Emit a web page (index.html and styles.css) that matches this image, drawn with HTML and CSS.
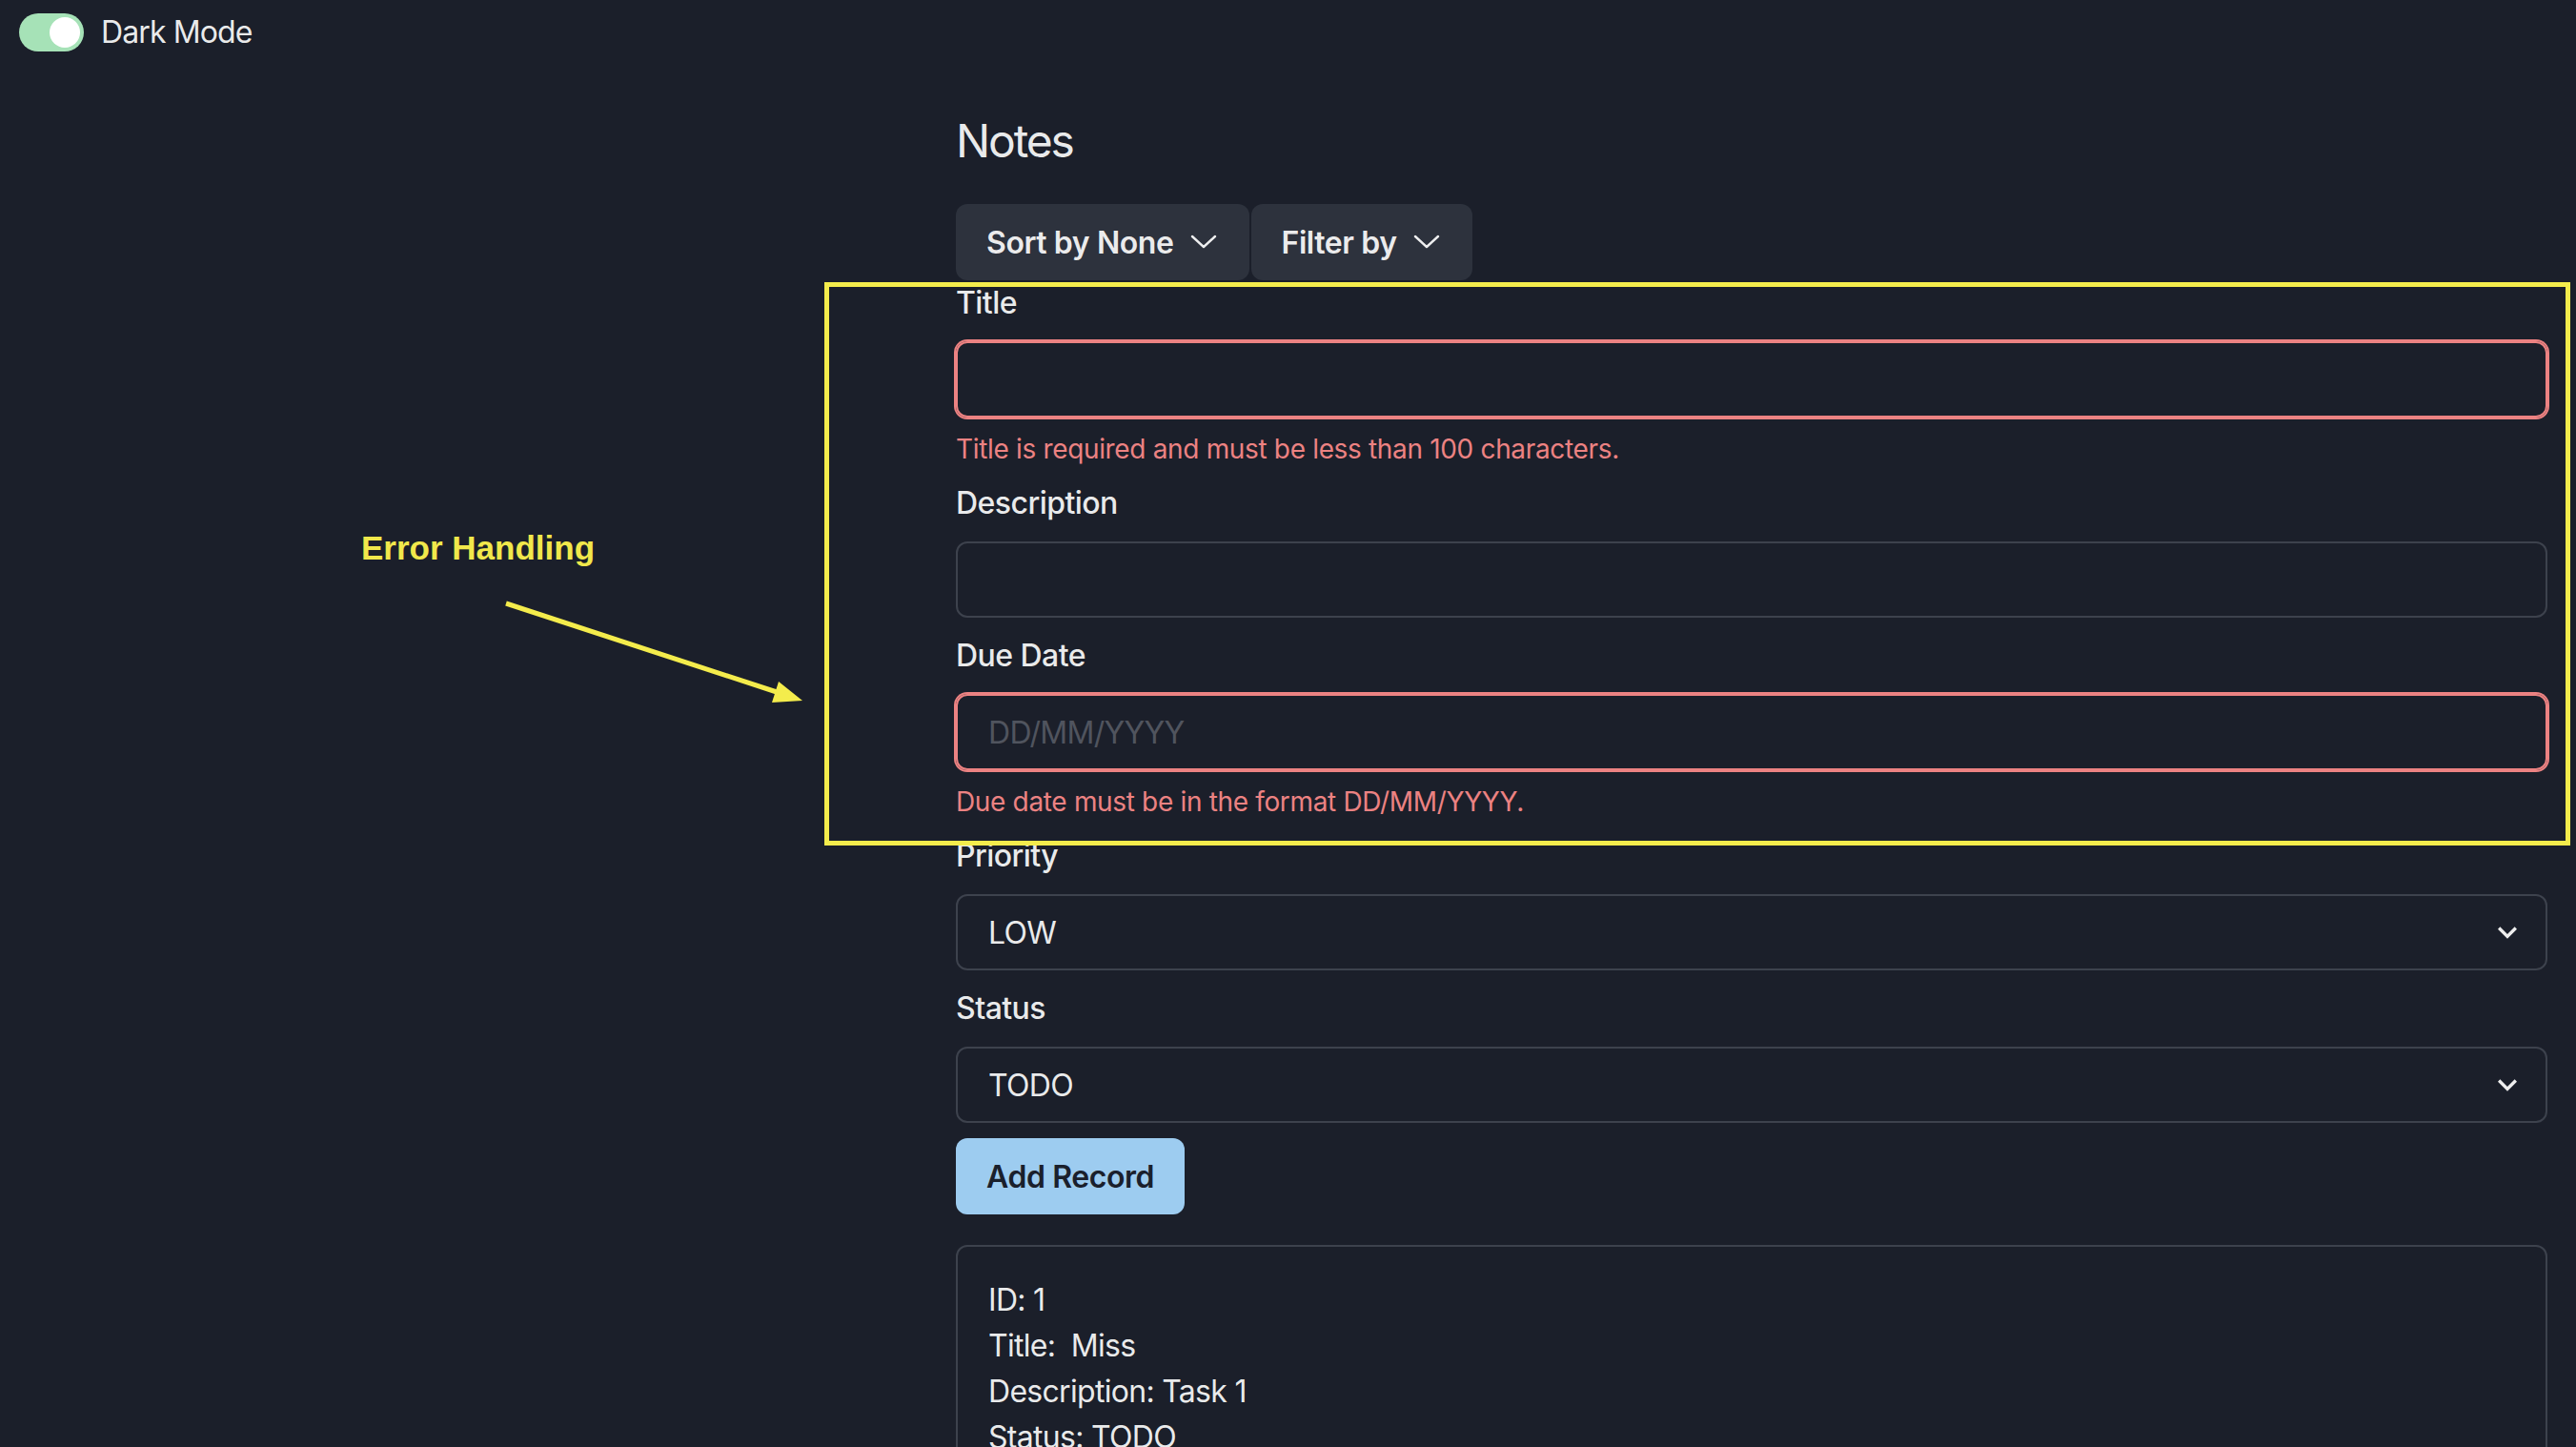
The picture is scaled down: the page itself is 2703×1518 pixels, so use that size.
FILE: index.html
```html
<!DOCTYPE html>
<html lang="en">
<head>
<meta charset="utf-8">
<title>Notes</title>
<link rel="stylesheet" href="styles.css">
</head>
<body>
<div class="topbar">
  <span class="switch"><span class="thumb"></span></span>
  <span class="mode-label">Dark Mode</span>
</div>

<main class="content">
  <h1 class="heading">Notes</h1>

  <div class="menus">
    <button class="menu-btn sort">Sort by None
      <svg class="menu-chev" viewBox="0 0 32 16" width="32" height="16"><polyline points="4,2 16,13 28,2" fill="none" stroke="currentColor" stroke-width="2.4" stroke-linecap="round" stroke-linejoin="round"/></svg>
    </button>
    <button class="menu-btn filter">Filter by
      <svg class="menu-chev" viewBox="0 0 32 16" width="32" height="16"><polyline points="4,2 16,13 28,2" fill="none" stroke="currentColor" stroke-width="2.4" stroke-linecap="round" stroke-linejoin="round"/></svg>
    </button>
  </div>

  <form class="form">
    <div class="field">
      <label class="label">Title</label>
      <input class="input invalid" type="text">
      <p class="error">Title is required and must be less than 100 characters.</p>
    </div>
    <div class="field">
      <label class="label">Description</label>
      <input class="input" type="text">
    </div>
    <div class="field">
      <label class="label">Due Date</label>
      <input class="input invalid" type="text" placeholder="DD/MM/YYYY">
      <p class="error">Due date must be in the format DD/MM/YYYY.</p>
    </div>
    <div class="field">
      <label class="label">Priority</label>
      <div class="select"><span>LOW</span>
        <svg class="select-chev" viewBox="0 0 24 24" width="40" height="40"><path d="M16.59 8.59L12 13.17 7.41 8.59 6 10l6 6 6-6z" fill="currentColor"/></svg>
      </div>
    </div>
    <div class="field">
      <label class="label">Status</label>
      <div class="select"><span>TODO</span>
        <svg class="select-chev" viewBox="0 0 24 24" width="40" height="40"><path d="M16.59 8.59L12 13.17 7.41 8.59 6 10l6 6 6-6z" fill="currentColor"/></svg>
      </div>
    </div>
    <div class="field">
      <button type="button" class="add-btn">Add Record</button>
    </div>
  </form>

  <div class="card">
    <p class="line">ID: 1</p>
    <p class="line">Title:&nbsp; Miss</p>
    <p class="line">Description: Task 1</p>
    <p class="line">Status: TODO</p>
  </div>
</main>

<div class="anno-box"></div>
<div class="anno-text">Error Handling</div>
<svg class="anno-arrow" width="2703" height="1518" viewBox="0 0 2703 1518">
  <line x1="531" y1="633" x2="815" y2="726" stroke="#f4ec4c" stroke-width="5"/>
  <polygon points="842,735 810,737 817,715" fill="#f4ec4c"/>
</svg>
</body>
</html>
```

FILE: styles.css
```css
* { box-sizing: border-box; }

html, body {
  margin: 0;
  padding: 0;
  background: #1b1f2a;
  color: rgba(255, 255, 255, 0.92);
  font-family: Inter, "Noto Sans", "Liberation Sans", sans-serif;
  overflow: hidden;
  height: 1518px;
}

.topbar {
  display: flex;
  align-items: center;
  gap: 18px;
  padding: 14px 20px 0;
  height: 54px;
}

.switch {
  display: inline-flex;
  align-items: center;
  justify-content: flex-end;
  width: 68px;
  height: 40px;
  padding: 4px;
  border-radius: 20px;
  background: #a6e2b7;
}

.thumb {
  width: 32px;
  height: 32px;
  border-radius: 50%;
  background: #ffffff;
}

.mode-label {
  font-size: 32px;
  line-height: 40px;
  letter-spacing: -0.028em;
}

.content {
  margin-left: 1003px;
  margin-right: 30px;
}

.heading {
  margin: 65px 0 0;
  font-size: 48px;
  line-height: 58px;
  font-weight: 400;
  letter-spacing: -0.045em;
}

.menus {
  display: flex;
  gap: 2px;
  margin-top: 37px;
}

.menu-btn {
  display: inline-flex;
  align-items: center;
  gap: 15px;
  height: 80px;
  padding: 0 32px;
  border: none;
  border-radius: 12px;
  background: #2d323d;
  color: rgba(255, 255, 255, 0.92);
  font-family: inherit;
  font-size: 32px;
  font-weight: 600;
  letter-spacing: -0.013em;
}

.menu-chev { display: block; }

.form { margin: 0; }

.field + .field { margin-top: 16px; }

.label {
  display: block;
  font-size: 32px;
  line-height: 48px;
  font-weight: 500;
  letter-spacing: -0.017em;
  margin: 0 0 16px;
}

.input {
  display: block;
  width: 100%;
  height: 80px;
  padding: 0 32px;
  border: 2px solid #3d424d;
  border-radius: 12px;
  background: transparent;
  color: rgba(255, 255, 255, 0.92);
  font-family: inherit;
  font-size: 32px;
  letter-spacing: -0.022em;
  outline: none;
}

.input::placeholder { color: #50545e; }

.input.invalid {
  border-color: #ec8282;
  box-shadow: 0 0 0 2px #ec8282;
}

.error {
  margin: 16px 0 0;
  font-size: 28px;
  line-height: 34px;
  letter-spacing: -0.012em;
  color: #ec8282;
}

.select {
  display: flex;
  align-items: center;
  justify-content: space-between;
  height: 80px;
  padding: 0 16px 0 32px;
  border: 2px solid #3d424d;
  border-radius: 12px;
  font-size: 32px;
  letter-spacing: -0.022em;
}

.select-chev { display: block; margin-right: 4px; color: #eeeeee; }

.add-btn {
  height: 80px;
  padding: 0 32px;
  border: none;
  border-radius: 12px;
  background: #9dccf0;
  color: #1a202c;
  font-family: inherit;
  font-size: 32px;
  font-weight: 600;
  letter-spacing: -0.013em;
}

.card {
  margin-top: 32px;
  border: 2px solid #3d424d;
  border-radius: 12px;
  padding: 32px 32px;
  min-height: 600px;
}

.line {
  margin: 0;
  font-size: 32px;
  line-height: 48px;
  letter-spacing: -0.022em;
}

.anno-box {
  position: absolute;
  left: 865px;
  top: 296px;
  width: 1832px;
  height: 591px;
  border: 5px solid #f4ec4c;
}

.anno-text {
  position: absolute;
  left: 379px;
  top: 557px;
  font-family: "Liberation Sans", Arial, sans-serif;
  font-weight: 700;
  font-size: 35px;
  line-height: 35px;
  color: #f1e84b;
}

.anno-arrow {
  position: absolute;
  left: 0;
  top: 0;
  pointer-events: none;
}
```
